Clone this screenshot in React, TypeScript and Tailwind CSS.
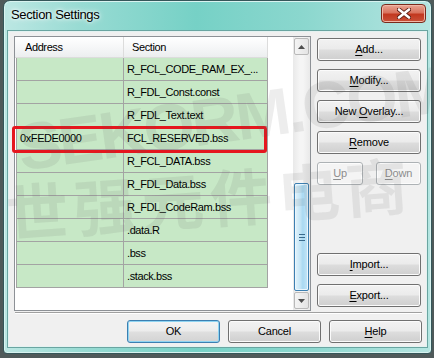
import React from "react";

const rows: [string, string][] = [
  ["", "R_FCL_CODE_RAM_EX_..."],
  ["", "R_FDL_Const.const"],
  ["", "R_FDL_Text.text"],
  ["0xFEDE0000", "FCL_RESERVED.bss"],
  ["", "R_FCL_DATA.bss"],
  ["", "R_FDL_Data.bss"],
  ["", "R_FDL_CodeRam.bss"],
  ["", ".data.R"],
  ["", ".bss"],
  ["", ".stack.bss"],
];

function U({ c }: { c: string }) {
  return <span className="underline underline-offset-[2px]">{c}</span>;
}

function Btn({
  children,
  className = "",
  disabled = false,
  def = false,
}: {
  children: React.ReactNode;
  className?: string;
  disabled?: boolean;
  def?: boolean;
}) {
  const base =
    "h-[23px] rounded-[3px] border flex items-center justify-center text-[11px] tracking-[-0.2px] leading-none";
  const normal =
    "border-[#707070] text-black bg-[linear-gradient(180deg,#f2f2f2_0%,#ebebeb_48%,#dddddd_52%,#cfcfcf_100%)] shadow-[inset_0_0_0_1px_#fbfbfb]";
  const dflt =
    "border-[#3c7fb1] text-black bg-[linear-gradient(180deg,#f4f4f4_0%,#ececec_48%,#dfdfdf_52%,#d3d3d3_100%)] shadow-[inset_0_0_0_1px_#8fd4f2]";
  const dis = "border-[#adb2b5] text-[#8d8d8d] bg-[#f4f4f4] shadow-[inset_0_0_0_1px_#fcfcfc]";
  return (
    <div className={`${base} ${disabled ? dis : def ? dflt : normal} ${className}`}>{children}</div>
  );
}

function Arrow({ up }: { up: boolean }) {
  return (
    <div className="h-[17px] w-[15px] rounded-[2px] border border-[#b9b9b9] bg-[linear-gradient(90deg,#f4f4f4,#e4e4e4)] flex items-center justify-center">
      <svg width="7" height="4" viewBox="0 0 7 4">
        {up ? (
          <path d="M0 4 L3.5 0 L7 4 Z" fill="#4d4d4d" />
        ) : (
          <path d="M0 0 L3.5 4 L7 0 Z" fill="#4d4d4d" />
        )}
      </svg>
    </div>
  );
}

export default function App() {
  return (
    <div className="w-[434px] h-[358px] bg-[#4f5a5a] overflow-hidden font-['Liberation_Sans',Arial,sans-serif]">
      <div className="relative overflow-hidden ml-[3px] w-[429px] h-[354px] rounded-t-[7px] rounded-b-[4px] border border-[#35575a] bg-[linear-gradient(90deg,#bce7e3_0%,#98dbd3_18%,#76d1c6_45%,#8bd7ce_70%,#b5e5e1_100%)] shadow-[inset_0_0_0_1px_#d8f3f0] flex flex-col">
        {/* title bar */}
        <div className="h-[30px] flex items-center pl-[7px] pb-[2px]">
          <span className="text-[13px] tracking-[-0.35px] text-black [text-shadow:0_0_6px_#ffffff,0_0_3px_#ffffff]">
            Section Settings
          </span>
        </div>
        {/* close */}
        <div className="absolute top-[3px] right-[5px] w-[45px] h-[19px] rounded-[4px] border border-[#7a2a1c] bg-[linear-gradient(180deg,#e8a593_0%,#d9745e_45%,#c2381f_55%,#c9523a_100%)] shadow-[inset_0_0_0_1px_#f0b8a8] flex items-center justify-center">
          <svg width="14" height="11" viewBox="0 0 14 11">
            <path d="M2 1.5 L12 9.5 M12 1.5 L2 9.5" stroke="#5a1c12" strokeWidth="4.2" strokeLinecap="round" />
            <path d="M2 1.5 L12 9.5 M12 1.5 L2 9.5" stroke="#ffffff" strokeWidth="2.6" strokeLinecap="round" />
          </svg>
        </div>

        {/* client area */}
        <div className="mx-[4px] h-[316px] border border-[#e4f2f1] shadow-[0_0_0_1px_#6aa5a1] bg-[#f0f0f0] flex flex-col pl-[5px] pr-[4px] pt-[4px]">
          <div className="flex">
            {/* list box */}
            <div className="relative w-[297px] h-[275px] border border-[#8d9196] bg-white flex">
              <div className="flex-1 flex flex-col">
                {/* header */}
                <div className="h-[21px] flex text-[11px] tracking-[-0.4px] text-black">
                  <div className="w-[109px] border-r border-b border-[#dcdcdc] bg-[linear-gradient(180deg,#ffffff_0%,#f6f7f8_50%,#eceeef_100%)] flex items-center pl-[10px]">
                    Address
                  </div>
                  <div className="w-[144px] border-r border-b border-[#dcdcdc] bg-[linear-gradient(180deg,#ffffff_0%,#f6f7f8_50%,#eceeef_100%)] flex items-center pl-[8px]">
                    Section
                  </div>
                </div>
                {rows.map(([a, s], i) => (
                  <div key={i} className="h-[23px] flex text-[11px] tracking-[-0.4px] text-black">
                    <div className="ml-[1px] w-[108px] border-l border-r border-b border-[#a3a3a3] bg-[#c7e8c6] flex items-center pl-[3px]">
                      {a}
                    </div>
                    <div className="w-[144px] border-r border-b border-[#a3a3a3] bg-[#c7e8c6] flex items-center pl-[3px]">
                      {s}
                    </div>
                  </div>
                ))}
              </div>
              {/* scrollbar */}
              <div className="w-[17px] bg-[linear-gradient(90deg,#e9e9e9,#f5f5f5_40%,#f5f5f5_60%,#e9e9e9)] flex flex-col items-center py-[1px]">
                <Arrow up />
                <div className="flex-1" />
                <div className="w-[15px] h-[108px] rounded-[2px] border border-[#3c7fb1] bg-[linear-gradient(90deg,#e3f4fc_0%,#c4e5f6_40%,#a9d9f2_60%,#c6e6f7_100%)] shadow-[inset_0_0_0_1px_#eaf6fd] flex flex-col items-center justify-center gap-[2px]">
                  <div className="w-[6px] h-px bg-[#3a6a8c]" />
                  <div className="w-[6px] h-px bg-[#3a6a8c]" />
                  <div className="w-[6px] h-px bg-[#3a6a8c]" />
                </div>
                <div className="mt-[1px]">
                  <Arrow up={false} />
                </div>
              </div>
              {/* highlight */}
              <div className="absolute left-[-3px] top-[89px] w-[255px] h-[27px] rounded-[3px] border-[3px] border-[#e5171e]" />
            </div>

            {/* side buttons */}
            <div className="ml-[6px] w-[104px] h-[275px] flex flex-col pt-[2px] pb-[4px] gap-[8px]">
              <Btn>
                <span>
                  <U c="A" />dd...
                </span>
              </Btn>
              <Btn>
                <span>
                  <U c="M" />odify...
                </span>
              </Btn>
              <Btn>
                <span>
                  New <U c="O" />verlay...
                </span>
              </Btn>
              <Btn>
                <span>
                  <U c="R" />emove
                </span>
              </Btn>
              <div className="flex justify-between">
                <Btn disabled className="w-[46px]">
                  <span>
                    <U c="U" />p
                  </span>
                </Btn>
                <Btn disabled className="w-[45px]">
                  <span>
                    <U c="D" />own
                  </span>
                </Btn>
              </div>
              <div className="flex-1" />
              <Btn>
                <span>
                  <U c="I" />mport...
                </span>
              </Btn>
              <Btn>
                <span>
                  <U c="E" />xport...
                </span>
              </Btn>
            </div>
          </div>

          {/* separator */}
          <div className="mt-[1px] ml-[1px] h-px bg-[#a0a0a0] border-b border-white box-content" />

          {/* bottom buttons */}
          <div className="mt-[6px] flex justify-end gap-[8px]">
            <Btn def className="w-[93px]">
              OK
            </Btn>
            <Btn className="w-[93px]">Cancel</Btn>
            <Btn className="w-[93px]">
              <span>
                <U c="H" />elp
              </span>
            </Btn>
          </div>
        </div>

        {/* watermark */}
        <div className="pointer-events-none absolute left-[14px] top-[114px] origin-left rotate-[-8deg] whitespace-nowrap text-[66px] font-bold tracking-[-3px] leading-none text-[rgba(90,90,90,0.11)]">
          SEKORM.COM
        </div>
        <div className="pointer-events-none absolute left-[2px] top-[178px] origin-left rotate-[-4deg] whitespace-nowrap text-[62px] font-bold tracking-[6px] leading-none text-[rgba(90,90,90,0.11)] font-['Noto_Sans_CJK_SC',sans-serif]">
          世强元件电商
        </div>
      </div>
    </div>
  );
}
